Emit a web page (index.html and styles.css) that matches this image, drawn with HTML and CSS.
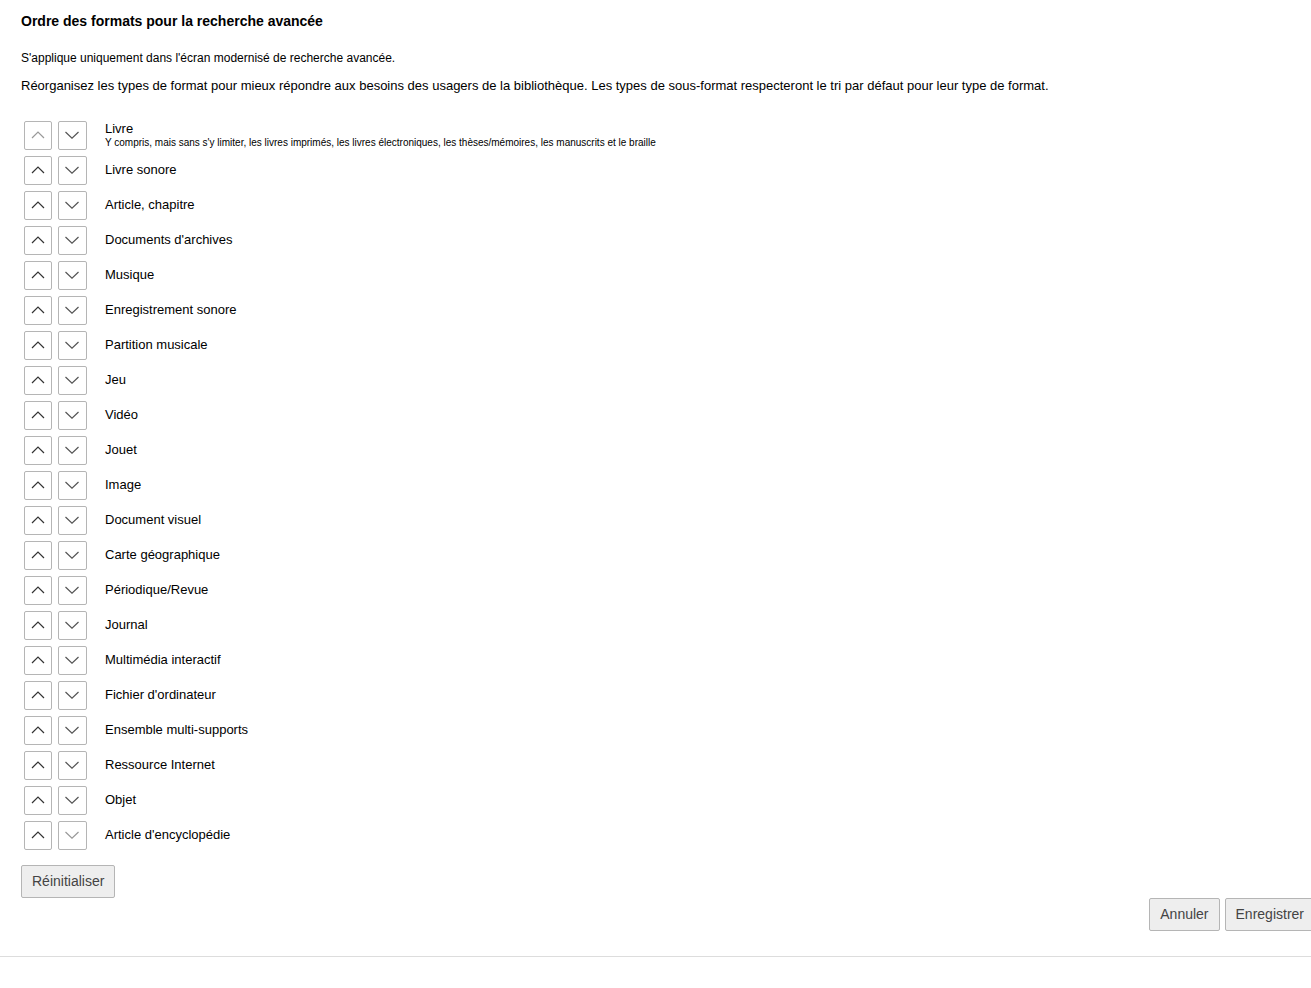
FILE: index.html
```html
<!DOCTYPE html>
<html lang="fr">
<head>
    <meta charset="UTF-8">
    <meta name="viewport" content="width=device-width, initial-scale=1.0">
    <title>Ordre des formats pour la recherche avancée</title>
    <link rel="stylesheet" href="styles.css">
    <script src="formats.js" defer></script>
</head>
<body>
    <main class="panel">
        <h1>Ordre des formats pour la recherche avancée</h1>
        <p class="note">S'applique uniquement dans l'écran modernisé de recherche avancée.</p>
        <p class="intro">Réorganisez les types de format pour mieux répondre aux besoins des usagers de la bibliothèque. Les types de sous-format respecteront le tri par défaut pour leur type de format.</p>
        <ul id="format-list" class="format-list"></ul>
        <button type="button" id="reset-button" class="button">Réinitialiser</button>
    </main>
    <footer class="actions">
        <button type="button" class="button">Annuler</button>
        <button type="button" class="button">Enregistrer</button>
    </footer>
</body>
</html>
```
FILE: styles.css
```css
body {
    margin: 0;
    background-color: #fff;
    color: #000;
    font-family: "Liberation Sans", Arial, sans-serif;
    font-size: 13px;
    overflow-x: hidden;
}
.panel {
    padding: 13px 21px 0;
}
h1 {
    margin: 0 0 21px;
    font-size: 14px;
    line-height: 16px;
}
p {
    margin: 0;
    line-height: 16px;
}
.note {
    margin-bottom: 12px;
    font-size: 12px;
}
.format-list {
    list-style: none;
    margin: 24px 0 12px;
    padding: 0 3px;
}
.format {
    display: flex;
    gap: 6px;
    padding: 3px 0;
}
.move {
    display: flex;
    flex: none;
    align-items: center;
    justify-content: center;
    box-sizing: border-box;
    width: 28px;
    height: 29px;
    padding: 0 0 1px;
    border: 1px solid #b5b5b5;
    border-radius: 2px;
    background-color: #fff;
    cursor: pointer;
}
.move-down {
    width: 29px;
    padding-right: 1px;
}
.move svg {
    width: 14px;
    height: 8px;
    fill: none;
    stroke: #333;
    stroke-width: 1.2;
}
.move-down svg {
    stroke: #555;
}
.move:disabled {
    cursor: default;
}
.move:disabled svg {
    stroke: #999;
}
.format-text {
    padding: 6px 0 0 12px;
    line-height: 16px;
}
.format-text.detailed {
    padding-top: 0;
}
.format-name,
.format-details {
    display: block;
}
.format-details {
    font-size: 10px;
    line-height: 12px;
}
.button {
    display: block;
    height: 33px;
    padding: 0 10px 2px;
    border: 1px solid #b5b5b5;
    border-radius: 2px;
    background-color: #eee;
    color: #444;
    font-family: inherit;
    font-size: 14px;
    cursor: pointer;
}
.actions {
    display: flex;
    justify-content: flex-end;
    gap: 5px;
    margin-right: -4px;
    padding-bottom: 25px;
    border-bottom: 1px solid #ddd;
}
```
FILE: formats.js
```javascript
const defaultFormats = [
    { name: "Livre", details: "Y compris, mais sans s'y limiter, les livres imprimés, les livres électroniques, les thèses/mémoires, les manuscrits et le braille" },
    { name: "Livre sonore" },
    { name: "Article, chapitre" },
    { name: "Documents d'archives" },
    { name: "Musique" },
    { name: "Enregistrement sonore" },
    { name: "Partition musicale" },
    { name: "Jeu" },
    { name: "Vidéo" },
    { name: "Jouet" },
    { name: "Image" },
    { name: "Document visuel" },
    { name: "Carte géographique" },
    { name: "Périodique/Revue" },
    { name: "Journal" },
    { name: "Multimédia interactif" },
    { name: "Fichier d'ordinateur" },
    { name: "Ensemble multi-supports" },
    { name: "Ressource Internet" },
    { name: "Objet" },
    { name: "Article d'encyclopédie" }
];
let formats = defaultFormats.slice();

const upIcon = '<svg viewBox="0 0 14 8" aria-hidden="true"><path d="M1 7 L7 1 L13 7"/></svg>';
const downIcon = '<svg viewBox="0 0 14 8" aria-hidden="true"><path d="M0.5 1 L7 7.2 L13.5 1"/></svg>';

function moveFormat(index, step) {
    const [format] = formats.splice(index, 1);
    formats.splice(index + step, 0, format);
    showFormats();
}

function moveButton(index, step) {
    const button = document.createElement('button');
    button.type = 'button';
    button.className = step < 0 ? 'move move-up' : 'move move-down';
    button.innerHTML = step < 0 ? upIcon : downIcon;
    button.setAttribute('aria-label', (step < 0 ? 'Monter : ' : 'Descendre : ') + formats[index].name);
    button.disabled = !formats[index + step];
    button.addEventListener('click', () => moveFormat(index, step));
    return button;
}

function showFormats() {
    const list = document.getElementById('format-list');
    list.innerHTML = '';
    formats.forEach((format, index) => {
        const item = document.createElement('li');
        item.className = 'format';
        const text = document.createElement('div');
        text.className = 'format-text';
        const name = document.createElement('span');
        name.className = 'format-name';
        name.textContent = format.name;
        text.appendChild(name);
        if (format.details) {
            const details = document.createElement('span');
            details.className = 'format-details';
            details.textContent = format.details;
            text.classList.add('detailed');
            text.appendChild(details);
        }
        item.append(moveButton(index, -1), moveButton(index, 1), text);
        list.appendChild(item);
    });
}

document.getElementById('reset-button').addEventListener('click', () => {
    formats = defaultFormats.slice();
    showFormats();
});

showFormats();
```
